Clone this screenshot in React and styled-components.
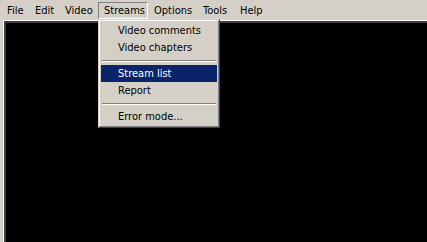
import React from "react";
import styled, { createGlobalStyle } from "styled-components";

const Global = createGlobalStyle`
  html, body { margin: 0; padding: 0; background: #d4d0c8; overflow: hidden; }
  body { font-family: "DejaVu Sans Condensed", Tahoma, "DejaVu Sans", sans-serif; font-size: 11px; }
`;

const Window = styled.div`
  position: relative;
  width: 427px;
  height: 242px;
  background: #d4d0c8;
  display: flex;
  flex-direction: column;
  overflow: hidden;
`;

const MenuBar = styled.div`
  display: flex;
  height: 20px;
  padding-left: 1px;
  align-items: stretch;
`;

const MenuTitle = styled.div`
  box-sizing: border-box;
  width: ${(p) => p.$w}px;
  padding: 0 5px;
  margin: 2px 0 1px;
  display: flex;
  align-items: center;
  color: #000;
  border: 1px solid transparent;
  ${(p) =>
    p.$open &&
    `border-color: #808080 #ffffff #ffffff #808080;`}
  white-space: nowrap;
`;

const Client = styled.div`
  flex: 1;
  margin-left: 3px;
  border-top: 1px solid #ffffff;
  border-left: 1px solid #ffffff;
  display: flex;
`;

const ClientInner = styled.div`
  flex: 1;
  border-top: 2px solid #404040;
  border-left: 2px solid #404040;
  background: #000;
`;

const Dropdown = styled.div`
  position: absolute;
  left: 98px;
  top: 19px;
  width: 122px;
  box-sizing: border-box;
  border: 1px solid;
  border-color: #d4d0c8 #404040 #404040 #d4d0c8;
  background: #d4d0c8;
`;

const DropInner = styled.div`
  border: 1px solid;
  border-color: #ffffff #808080 #808080 #ffffff;
  padding: 1px 1px 1px 1px;
  display: flex;
  flex-direction: column;
`;

const Item = styled.div`
  height: 17px;
  display: flex;
  align-items: center;
  padding-left: 17px;
  color: ${(p) => (p.$active ? "#ffffff" : "#000")};
  background: ${(p) => (p.$active ? "#0a246a" : "transparent")};
  white-space: nowrap;
`;

const Separator = styled.div`
  height: 9px;
  display: flex;
  flex-direction: column;
  justify-content: center;
  padding: 0 1px;
  &::before {
    content: "";
    display: block;
    height: 1px;
    background: #808080;
  }
  &::after {
    content: "";
    display: block;
    height: 1px;
    background: #ffffff;
  }
`;

const titles = [
  { t: "File", w: 28 },
  { t: "Edit", w: 30 },
  { t: "Video", w: 39 },
  { t: "Streams", w: 50, open: true },
  { t: "Options", w: 49 },
  { t: "Tools", w: 37 },
  { t: "Help", w: 36 },
];

export default function App() {
  return (
    <Window>
      <Global />
      <MenuBar>
        {titles.map((m) => (
          <MenuTitle key={m.t} $w={m.w} $open={m.open}>
            {m.t}
          </MenuTitle>
        ))}
      </MenuBar>
      <Client>
        <ClientInner />
      </Client>
      <Dropdown>
        <DropInner>
          <Item>Video comments</Item>
          <Item>Video chapters</Item>
          <Separator />
          <Item $active>Stream list</Item>
          <Item>Report</Item>
          <Separator />
          <Item>Error mode...</Item>
        </DropInner>
      </Dropdown>
    </Window>
  );
}
